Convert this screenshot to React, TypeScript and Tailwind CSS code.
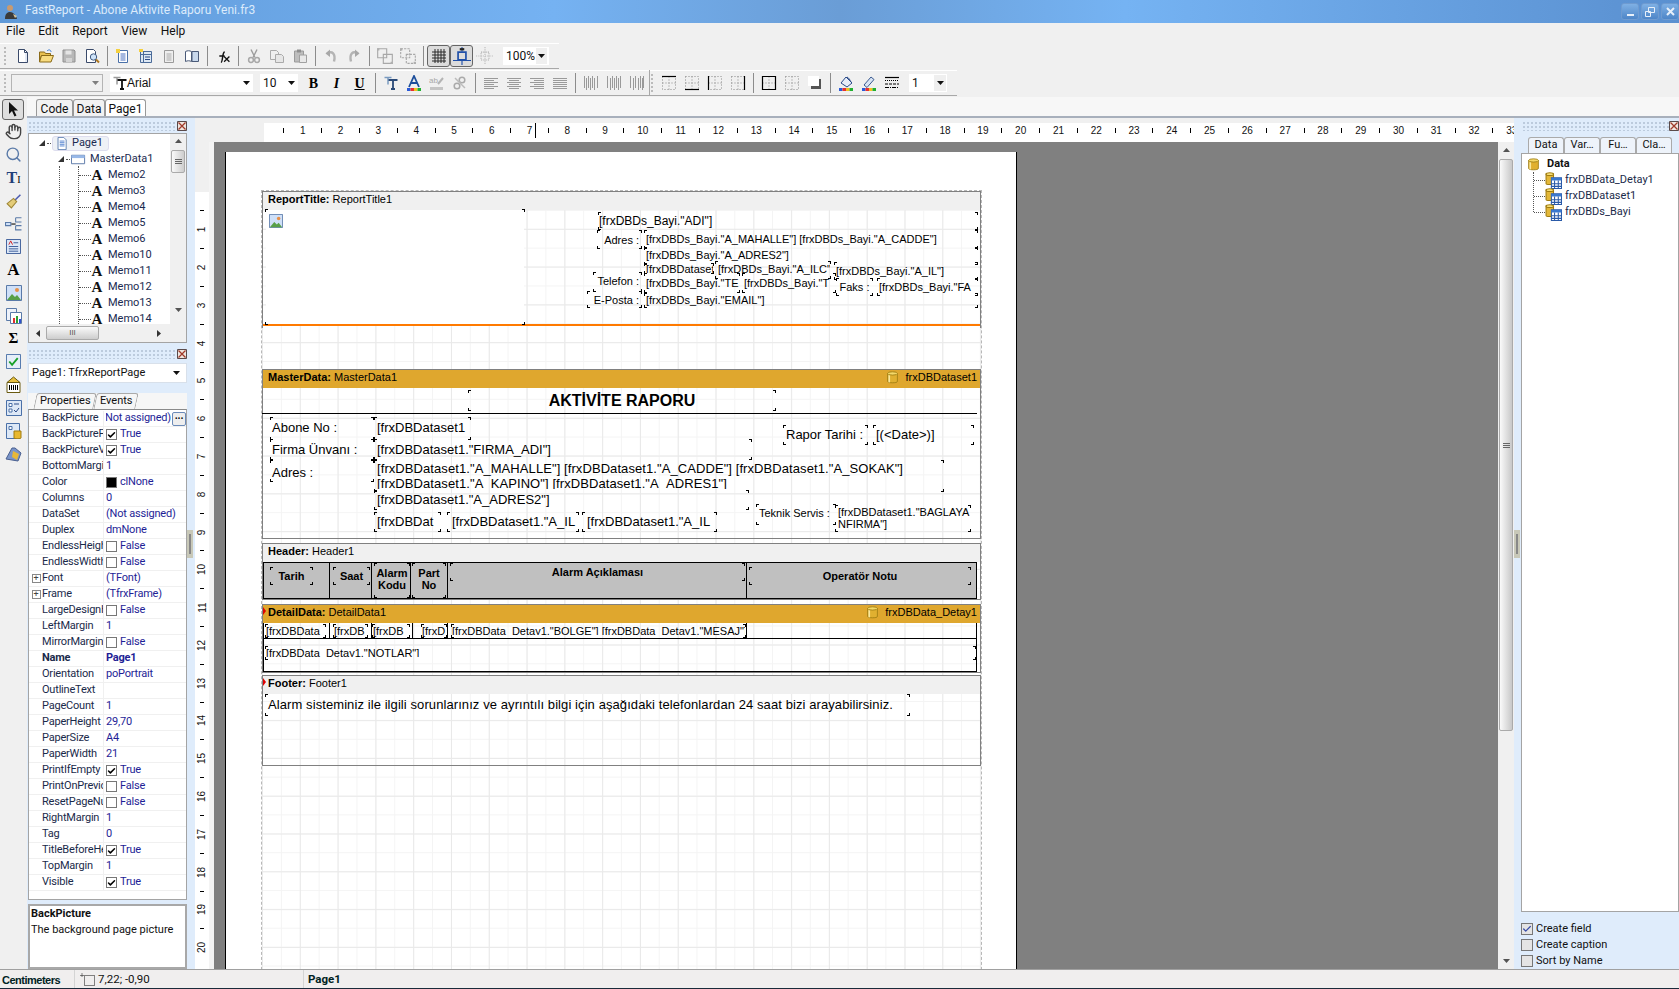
import type { ReactNode } from "react";
import { Check, Search, Hand } from "lucide-react";

// small inline toolbar glyphs, all on a 16px box
const Svg = ({ children, size = 16, className = "" }: { children: ReactNode; size?: number; className?: string }) => (
  <svg width={size} height={size} viewBox="0 0 16 16" fill="none" className={`shrink-0 ${className}`}>{children}</svg>
);

const NewDoc = () => <Svg><path d="M3.5 1.5h6l3 3v10h-9z" fill="#fff" stroke="#3a4a6a" /><path d="M9.5 1.5v3h3" stroke="#3a4a6a" /><path d="M11 5v9" stroke="#c8d4e8" /></Svg>;
const OpenFolder = () => <Svg><path d="M1.5 4h5l1 1.5h5v2h-9l-2 6z" fill="#e8c050" stroke="#8a6a18" /><path d="M3.5 7.5h12l-2.5 6.5H1.5z" fill="#f8dc80" stroke="#8a6a18" /><path d="M9 3c2-2 4-1 4 1" stroke="#3a7ad0" /></Svg>;
const SaveIcon = () => <Svg><path d="M2 2h11l1 1v11H2z" fill="#b8b8b8" stroke="#909090" /><path d="M4.500 2.500h6v4h-6z" fill="#e4e4e4" /><path d="M5 10h6v4H5z" fill="#d4d4d4" /></Svg>;
const Preview = () => <Svg><path d="M2.500 1.500h7l2 2v11h-9z" fill="#fff" stroke="#3a4a6a" /><circle cx="9.500" cy="9" r="3.200" fill="#cfe4fa" stroke="#405a80" /><path d="M12 11.500l3 3" stroke="#b07820" strokeWidth="2" /></Svg>;
const PageLines = ({ star = false, muted = false }: { star?: boolean; muted?: boolean }) => (
  <Svg>
    <path d="M3.500 2.500h9v12h-9z" fill={muted ? "#eee" : "#fff"} stroke={muted ? "#9a9a9a" : "#4a70a8"} />
    <path d="M5.500 6h5M5.500 8h5M5.500 10h5M5.500 12h5" stroke={muted ? "#aaa" : "#4a70c0"} />
    {star && <path d="M1 1h4v4H1z" fill="#f4d040" />}
  </Svg>
);
const VarsIcon = () => <Svg><path d="M2.500 3.500h11v11h-11z" fill="#dde8f4" stroke="#4a6a98" /><path d="M2.500 6.500h11M5.500 3.500v11" stroke="#4a6a98" /><path d="M7 9h5M7 11.500h5" stroke="#2a4a88" /><path d="M1 1h4v3H1z" fill="#f4d040" /></Svg>;
const BookIcon = () => <Svg><path d="M1.500 3.500c2-1 4-1 6 0v10c-2-1-4-1-6 0z" fill="#fff" stroke="#4a5a78" /><path d="M8 3.500h6.500v10H8z" fill="#c8d8ec" stroke="#4a5a78" /></Svg>;
const Scissors = () => <Svg><path d="M5 1.500l4 8M11 1.500l-4 8" stroke="#9c9c9c" strokeWidth="1.400" /><circle cx="5" cy="12" r="2.400" stroke="#a8a8a8" strokeWidth="1.500" /><circle cx="11" cy="12" r="2.400" stroke="#a8a8a8" strokeWidth="1.500" /></Svg>;
const CopyIcon = () => <Svg><path d="M1.500 2.500h6l2 2v7h-8z" fill="#efefef" stroke="#aaa" /><path d="M6.500 6.500h6l2 2v6h-8z" fill="#e6e6e6" stroke="#aaa" /></Svg>;
const PasteIcon = () => <Svg><path d="M2.500 3h9v11h-9z" fill="#bdbdbd" stroke="#9a9a9a" /><path d="M5 1.500h4v3H5z" fill="#8e8e8e" /><path d="M7.500 7h7v7.500h-7z" fill="#e8e8e8" stroke="#a0a0a0" /></Svg>;
const Undo = ({ flip = false }: { flip?: boolean }) => <Svg className={flip ? "-scale-x-100" : ""}><path d="M4 5.500c5-3 9 0 7 8" stroke="#b4b4b4" strokeWidth="2.400" /><path d="M7 1.500L2.500 5.500 7 9z" fill="#a8a8a8" /></Svg>;
const GroupIcon = ({ alt = false }: { alt?: boolean }) => (
  <Svg size={18}>
    <path d="M1.500 1.500h8v8h-8zM6.500 6.500h8v8h-8z" stroke="#a8a8a8" strokeDasharray={alt ? "2 1" : undefined} />
    <path d="M1 1h2v2H1zM13 13h2v2h-2z" fill="#b0b0b0" />
  </Svg>
);
const GridIcon = () => <Svg><path d="M1 4h14M1 7h14M1 10h14M1 13h14M4 1v14M7 1v14M10 1v14M13 1v14" stroke="#2a2a2a" /></Svg>;
const FitIcon = () => <Svg size={18}><path d="M4.500 4.500h7v7h-7z" stroke="#1f4fa8" strokeWidth="1.500" /><path d="M0 12h16M8 0v4M8 12v4" stroke="#1f4fa8" /><path d="M6 1h4v2H6z" fill="#222" /></Svg>;
const DotFit = () => <Svg size={18}><path d="M4.500 4.500h7v7h-7z" stroke="#aaa" strokeDasharray="1 1" /><path d="M0 8h16M8 0v16" stroke="#bbb" strokeDasharray="1 1" /></Svg>;
const FxIcon = () => <Svg size={17}><path d="M6.500 13.500c2 0 1-9 3.500-10M5 7.500h5" stroke="#111" strokeWidth="1.400" /><path d="M9.500 8l5 5M14.500 8l-5 5" stroke="#111" strokeWidth="1.200" /></Svg>;
const TextT = ({ color = "#111", shadow = "#9a9a9a" }: { color?: string; shadow?: string }) => (
  <Svg>
    <path d="M1.500 2.500h7M5 2.500v7" stroke={shadow} strokeWidth="1.500" />
    <path d="M5.500 5h9M10 5v9M8 14h4" stroke={color} strokeWidth="1.800" />
  </Svg>
);
const ColorBar = () => <g><path d="M1 13h3.500v3H1z" fill="#2a5ad8" /><path d="M4.500 13H8v3H4.500z" fill="#e83030" /><path d="M8 13h3.500v3H8z" fill="#f0c020" /><path d="M11.500 13H15v3h-3.500z" fill="#20b030" /></g>;
const FontColor = () => <Svg><path d="M3 12L8 1l5 11M5 8h6" stroke="#1d4e9a" strokeWidth="1.800" /><ColorBar /></Svg>;
const AbcHighlight = () => <Svg><text x="0" y="8" fontSize="8" fontFamily="Liberation Sans" fill="#a8a8a8">ab</text><path d="M9 9l5-6" stroke="#b4b4b4" strokeWidth="2" /><path d="M1 12h13v3H1z" fill="#c4c4c4" /></Svg>;
const LinkIcon = () => <Svg><circle cx="5" cy="11" r="2.800" stroke="#aaa" strokeWidth="1.500" /><circle cx="10" cy="5" r="2.800" stroke="#aaa" strokeWidth="1.500" /><path d="M3 3l10 10" stroke="#bbb" strokeWidth="1.500" /></Svg>;
const AlignLines = ({ mode }: { mode: "l" | "c" | "r" | "j" }) => {
  const short = mode === "j" ? [1, 15] : mode === "l" ? [1, 11] : mode === "c" ? [3, 13] : [5, 15];
  return (
    <Svg>
      {[3, 5, 7, 9, 11, 13].map((y, i) => (
        <path key={y} d={`M${i % 2 ? short[0] : 1} ${y + 0.5}H${i % 2 ? short[1] : 15}`} stroke="#9a9a9a" />
      ))}
    </Svg>
  );
};
const Bars = ({ xs }: { xs: number[] }) => <Svg>{xs.map((x, i) => <path key={x} d={`M${x + 0.5} ${i % 2 ? 3 : 1}V${i % 2 ? 15 : 13}`} stroke="#9a9a9a" />)}</Svg>;
const FrameIcon = ({ side }: { side?: "t" | "b" | "l" | "r" | "all" }) => (
  <Svg>
    <path d="M1.500 1.500h13v13h-13zM8 1.500v13M1.500 8h13" stroke="#8a8a8a" strokeDasharray="1 2" />
    {side === "t" && <path d="M1 1.500h14" stroke="#000" strokeWidth="1.200" />}
    {side === "b" && <path d="M1 14.500h14" stroke="#000" strokeWidth="1.200" />}
    {side === "l" && <path d="M1.500 1v14" stroke="#000" strokeWidth="1.200" />}
    {side === "r" && <path d="M14.500 1v14" stroke="#000" strokeWidth="1.200" />}
    {side === "all" && <path d="M1.500 1.500h13v13h-13z" stroke="#000" strokeWidth="1.200" />}
  </Svg>
);
const ShadowIcon = () => <Svg><path d="M4 12V4h10v10H4z" fill="#555" /><path d="M1 1h11v10H1z" fill="#fff" /></Svg>;
const Bucket = () => <Svg><path d="M3 8l5-6 6 6-5 4z" fill="#e8eef8" stroke="#2a4a88" /><path d="M9 2c2 1 3 3 4 5" stroke="#2a4a88" /><ColorBar /></Svg>;
const Pen = () => <Svg><path d="M3 10l7-8 3 2.500-7 8z" fill="#d8e4f4" stroke="#3a5a90" /><ColorBar /></Svg>;
const LineStyle = () => <Svg><path d="M1 2.500h14" stroke="#000" strokeWidth="1.200" /><path d="M1 5.500h14" stroke="#000" strokeDasharray="1 1" /><path d="M1 9h14" stroke="#000" strokeDasharray="3 1" /><path d="M1 12.500h14" stroke="#000" strokeDasharray="4 1 1 1" /></Svg>;
const Db = ({ size = 13 }: { size?: number }) => (
  <Svg size={size}>
    <path d="M2 3v10c0 2 12 2 12 0V3z" fill="#e0b030" stroke="#9a7a10" />
    <path d="M4 5v9" stroke="#f8e8a0" strokeWidth="2" />
    <ellipse cx="8" cy="3" rx="6" ry="2" fill="#f4d868" stroke="#9a7a10" />
  </Svg>
);
const DbTable = () => (
  <Svg size={17}>
    <path d="M1 2v9c0 1 7 1 7 0V2z" fill="#e4b838" stroke="#a07c10" />
    <ellipse cx="4.500" cy="2" rx="3.500" ry="1.300" fill="#f6de78" stroke="#a07c10" />
    <path d="M6 5.500h9.500v10H6z" fill="#fff" stroke="#2a5aa8" />
    <path d="M6 5.500h9.500v2.500H6z" fill="#3a78d0" />
    <path d="M6 11h9.500M6 13.500h9.500M9 8v7.500M12.500 8v7.500" stroke="#2a5aa8" />
  </Svg>
);
const PageTree = () => <Svg size={13}><path d="M2.500 .5h7l3 3v12h-10z" fill="#fff" stroke="#4a70a8" /><path d="M4.500 5h6M4.500 7h6M4.500 9h6M4.500 11h6" stroke="#3a70c8" /></Svg>;
const BandIcon = () => <Svg size={15}><path d="M.5 3.500h14v9H.5z" fill="#fff" stroke="#5a78a8" /><path d="M.5 3.500h14v3H.5z" fill="#98b8e8" /></Svg>;
const BigA = () => <span className="font-['Liberation_Serif',serif] font-bold text-[15px] leading-none text-[#111] w-[12px] text-center shrink-0">A</span>;
const Triangle = () => <svg width="6" height="6" viewBox="0 0 6 6" className="shrink-0"><path d="M0 6L6 0v6z" fill="#333" /></svg>;
const Caret = ({ className = "" }: { className?: string }) => <svg width="7" height="4" viewBox="0 0 7 4" className={`shrink-0 ${className}`}><path d="M0 0h7L3.500 4z" fill="#111" /></svg>;
const CloseBox = () => (
  <svg width="10" height="10" viewBox="0 0 10 10" className="shrink-0">
    <path d="M.5.500h9v9h-9z" fill="#efe6e0" stroke="#5a4a4a" />
    <path d="M1.500 1.500l7 7M8.500 1.500l-7 7" stroke="#a03a2a" strokeWidth="1.300" />
  </svg>
);
const Picture = ({ size = 14 }: { size?: number }) => (
  <Svg size={size}>
    <path d="M.5.500h15v15H.5z" fill="#cfe0f8" stroke="#5a7aa8" />
    <path d="M1 15l5-6 3 3 2-2 4 5z" fill="#58a048" />
    <circle cx="11" cy="5" r="2" fill="#e89048" />
  </Svg>
);

const ToolBtn = ({ children, active = false }: { children: ReactNode; active?: boolean }) => (
  <div className={`w-[23px] h-[22px] shrink-0 flex items-center justify-center rounded-[3px] ${active ? "border border-[#666] bg-[#dcdcdc]" : ""}`}>{children}</div>
);
const Sep = () => <div className="w-[8px] h-[20px] shrink-0 flex justify-center"><div className="w-[1px] h-full bg-[#8c8c8c]" /></div>;
const Grip = () => <div className="w-[4px] h-[20px] shrink-0 bg-[radial-gradient(#bbbbbb_1px,transparent_1px)] bg-[size:4px_4px]" />;

function TitleBar() {
  return (
    <div className="h-[23px] shrink-0 flex items-center bg-[linear-gradient(to_right,#5f99d8_0%,#75b2f2_33%,#6a9dd6_50%,#75b3f3_67%,#5a90d0_100%)]">
      <svg width="16" height="16" viewBox="0 0 16 16" className="ml-[3px] shrink-0">
        <circle cx="7" cy="4" r="3" fill="#c89a70" />
        <path d="M2 15c0-5 2-7 5-7s6 3 7 7z" fill="#3a3a3a" />
        <path d="M10 10l4 2-2 2z" fill="#d8c8a0" />
      </svg>
      <span className="ml-[6px] mt-[-3px] text-[12px] text-[#dcebfb]">FastReport - Abone Aktivite Raporu Yeni.fr3</span>
      <div className="ml-auto flex gap-[2px]">
        {["min", "max", "close"].map((b) => (
          <div key={b} className="w-[18px] h-[17px] rounded-[3px] border border-[#6f9bd0] bg-[linear-gradient(to_bottom,#7fb0e4,#4e86c8)] flex items-center justify-center">
            {b === "min" && <div className="w-[7px] h-[2px] mt-[7px] bg-[#e8f0fa]" />}
            {b === "max" && <svg width="10" height="10" viewBox="0 0 10 10"><path d="M3.500.500h6v5h-6zM.500 4.500h5v5h-5z" stroke="#e8f0fa" fill="none" /></svg>}
            {b === "close" && <svg width="9" height="9" viewBox="0 0 9 9"><path d="M1 1l7 7M8 1L1 8" stroke="#e8f0fa" strokeWidth="2" /></svg>}
          </div>
        ))}
      </div>
    </div>
  );
}

function MenuBar() {
  return (
    <div className="h-[20px] shrink-0 flex items-center gap-[13.500px] pl-[6px] pb-[4px] text-[12px] text-[#111] bg-[#f0f0f0]">
      <span>File</span><span>Edit</span><span>Report</span><span>View</span><span>Help</span>
    </div>
  );
}

function Toolbar1() {
  return (
    <div className="h-[27px] shrink-0 bg-[#f0f0f0]">
      <div className="w-[559px] h-[26px] flex items-center pl-[3px] border-t border-white border-b border-b-[#a8a8a8]">
        <Grip />
        <div className="w-[4px]" />
        <ToolBtn><NewDoc /></ToolBtn><ToolBtn><OpenFolder /></ToolBtn><ToolBtn><SaveIcon /></ToolBtn><ToolBtn><Preview /></ToolBtn>
        <Sep />
        <ToolBtn><PageLines star /></ToolBtn><ToolBtn><VarsIcon /></ToolBtn><ToolBtn><PageLines muted /></ToolBtn><ToolBtn><BookIcon /></ToolBtn>
        <Sep />
        <ToolBtn><FxIcon /></ToolBtn>
        <Sep />
        <ToolBtn><Scissors /></ToolBtn><ToolBtn><CopyIcon /></ToolBtn><ToolBtn><PasteIcon /></ToolBtn>
        <Sep />
        <ToolBtn><Undo /></ToolBtn><ToolBtn><Undo flip /></ToolBtn>
        <Sep />
        <ToolBtn><GroupIcon /></ToolBtn><ToolBtn><GroupIcon alt /></ToolBtn>
        <Sep />
        <ToolBtn active><GridIcon /></ToolBtn><ToolBtn active><FitIcon /></ToolBtn><ToolBtn><DotFit /></ToolBtn>
        <div className="ml-[7px] w-[46px] h-[18px] bg-white flex items-center justify-between pl-[3px] pr-[2px] text-[12px] text-[#111]">
          100%
          <div className="w-[11px] h-[16px] bg-[#efefef] flex items-center justify-center"><Caret /></div>
        </div>
      </div>
    </div>
  );
}

function Toolbar2() {
  return (
    <div className="h-[27px] shrink-0 bg-[#f0f0f0]">
      <div className="w-[957px] h-[26px] flex items-center pl-[3px] border-t border-white border-b border-b-[#a8a8a8]">
        <Grip />
        <div className="ml-[4px] w-[92px] h-[18px] border border-[#b4b4b4] bg-[#f0f0f0] flex items-center justify-end pr-[3px]"><Caret className="opacity-50" /></div>
        <div className="ml-[7px] w-[143px] h-[18px] bg-white flex items-center pl-[2px] pr-[3px] text-[12px] text-[#111] font-['Liberation_Sans',sans-serif]">
          <TextT />
          <span className="ml-[-1px]">Arial</span>
          <Caret className="ml-auto" />
        </div>
        <div className="ml-[7px] w-[38px] h-[18px] bg-white flex items-center pl-[3px] pr-[3px] text-[12px] text-[#111]">
          10
          <Caret className="ml-auto" />
        </div>
        <div className="w-[4px]" />
        <ToolBtn><span className="font-['Liberation_Serif',serif] font-bold text-[14px] text-black">B</span></ToolBtn>
        <ToolBtn><span className="font-['Liberation_Serif',serif] font-bold italic text-[14px] text-black">I</span></ToolBtn>
        <ToolBtn><span className="font-['Liberation_Serif',serif] font-bold underline text-[14px] text-black">U</span></ToolBtn>
        <Sep />
        <ToolBtn><TextT color="#2a4a78" shadow="#7a9ac0" /></ToolBtn><ToolBtn><FontColor /></ToolBtn><ToolBtn><AbcHighlight /></ToolBtn><ToolBtn><LinkIcon /></ToolBtn>
        <Sep />
        <ToolBtn><AlignLines mode="l" /></ToolBtn><ToolBtn><AlignLines mode="c" /></ToolBtn><ToolBtn><AlignLines mode="r" /></ToolBtn><ToolBtn><AlignLines mode="j" /></ToolBtn>
        <Sep />
        <ToolBtn><Bars xs={[1, 3, 5, 7, 9, 11, 14]} /></ToolBtn><ToolBtn><Bars xs={[1, 4, 6, 8, 10, 12, 14]} /></ToolBtn><ToolBtn><Bars xs={[1, 4, 6, 9, 11, 13, 14]} /></ToolBtn>
        <div className="w-[1px] h-[26px] bg-[#a8a8a8] ml-[1px]" />
        <Grip />
        <div className="w-[3px]" />
        <ToolBtn><FrameIcon side="t" /></ToolBtn><ToolBtn><FrameIcon side="b" /></ToolBtn><ToolBtn><FrameIcon side="l" /></ToolBtn><ToolBtn><FrameIcon side="r" /></ToolBtn>
        <Sep />
        <ToolBtn><FrameIcon side="all" /></ToolBtn><ToolBtn><FrameIcon /></ToolBtn><ToolBtn><ShadowIcon /></ToolBtn>
        <Sep />
        <ToolBtn><Bucket /></ToolBtn><ToolBtn><Pen /></ToolBtn><ToolBtn><LineStyle /></ToolBtn>
        <div className="ml-[6px] w-[38px] h-[18px] bg-white flex items-center justify-between pl-[3px] pr-[1px] text-[12px] text-[#111]">
          1
          <div className="w-[12px] h-[16px] bg-[#efefef] flex items-center justify-center"><Caret /></div>
        </div>
      </div>
    </div>
  );
}

const Tool = ({ children }: { children: ReactNode }) => <div className="w-[22px] h-[21px] flex items-center justify-center">{children}</div>;

function ToolColumn() {
  return (
    <div className="w-[27px] shrink-0 bg-[#f0f0f0] flex flex-col items-center pt-[2px]">
      <div className="w-[22px] h-[21px] border border-[#666] rounded-[3px] bg-[#dedede] flex items-center justify-center ml-[-2px]">
        <svg width="12" height="15" viewBox="0 0 12 15"><path d="M2 0v12l3-3 2.500 5.500 2-1L7 8.500h4z" fill="#111" /></svg>
      </div>
      <div className="flex flex-col items-center gap-[2px] mt-[1px]">
        <Tool><Hand size={17} color="#444" /></Tool>
        <Tool><Search size={17} color="#5a7aa8" /></Tool>
        <Tool><span className="font-['Liberation_Serif',serif] font-bold text-[16px] text-[#1f3f7a] leading-none">T<span className="text-black text-[10px] font-normal">I</span></span></Tool>
        <Tool><svg width="17" height="17" viewBox="0 0 16 16"><path d="M9 7l5-5 1 1-5 5z" fill="#4a5ab0" /><path d="M2 11l6-5 3 3-5 6z" fill="#e4cc78" stroke="#a08838" /></svg></Tool>
        <Tool><svg width="17" height="17" viewBox="0 0 16 16" fill="none"><path d="M.5 7h5v3h-5z" fill="#cfe0f8" stroke="#5a7aa8" /><path d="M10 2.500h5.500M10 2.500v4h5.500M10 10h5.500M10 10v4h5.500" stroke="#5a7aa8" /><path d="M6 8.500h4" stroke="#000" /></svg></Tool>
        <Tool><svg width="15" height="15" viewBox="0 0 16 16" fill="none"><path d="M.5.500h15v15H.5z" fill="#dce8f8" stroke="#3a5a98" /><path d="M3 6l2-4 2 4" stroke="#d02020" /><path d="M8 4h5M3 8h10M3 10.500h10M3 13h10" stroke="#3a5a98" /></svg></Tool>
        <Tool><span className="font-['Liberation_Serif',serif] font-bold text-[17px] text-black leading-none">A</span></Tool>
        <Tool><Picture size={16} /></Tool>
        <Tool><svg width="16" height="16" viewBox="0 0 16 16"><path d="M.5.500h10v12H.5z" fill="#eef2fa" stroke="#5a7aa8" /><path d="M4.500 4.500h11v11h-11z" fill="#fff" stroke="#5a7aa8" /><path d="M7 10h2v5H7z" fill="#e03030" /><path d="M10 8h2v7h-2z" fill="#30a030" /><path d="M13 11h2v4h-2z" fill="#3050d0" /></svg></Tool>
        <Tool><span className="font-['Liberation_Serif',serif] font-bold text-[15px] text-black leading-none">Σ</span></Tool>
        <Tool><svg width="15" height="15" viewBox="0 0 16 16" fill="none"><path d="M.5.500h15v15H.5z" fill="#e6eef8" stroke="#4a70a8" /><path d="M3.500 8l3 3.500 6-7" stroke="#18a028" strokeWidth="2" /></svg></Tool>
        <Tool><svg width="15" height="17" viewBox="0 0 15 17"><path d="M1 6.500h13v10H1z" fill="#fff" stroke="#6a5a10" /><path d="M1 6.500L7.500 1 14 6.500z" fill="#e8c040" stroke="#6a5a10" /><path d="M3.500 9v5M5.500 9v5M7.500 9v5M9.500 9v5M11.500 9v5" stroke="#000" /></svg></Tool>
        <Tool><svg width="16" height="16" viewBox="0 0 16 16" fill="none"><path d="M.5.500h15v15H.5z" fill="#dde8f6" stroke="#4a70a8" /><path d="M3 3.500h3v3H3zM3 9h3v3H3z" fill="#fff" stroke="#4a70a8" /><path d="M8 4h5M8 10l2 2 3-4" stroke="#2a4a88" /></svg></Tool>
        <Tool><svg width="16" height="16" viewBox="0 0 16 16"><path d="M.5.500h13v15H.5z" fill="#dde8f6" stroke="#4a70a8" /><path d="M3 3.500h3v3H3z" fill="#fff" stroke="#4a70a8" /><path d="M8 8v7c0 1 7 1 7 0V8z" fill="#e8b830" stroke="#a07c10" /></svg></Tool>
        <Tool><svg width="17" height="16" viewBox="0 0 17 16"><path d="M1 13L7 2h3l6 5-3 8z" fill="#7a94c8" stroke="#4a6090" /><path d="M8 5l6 3-2 6-5-3z" fill="#e8b838" /></svg></Tool>
      </div>
    </div>
  );
}

const PanelHead = () => (
  <div className="h-[10px] flex items-center justify-end bg-[radial-gradient(#bccbdd_1px,transparent_1px)] bg-[size:4px_4px]"><CloseBox /></div>
);

const memoRows = ["Memo2", "Memo3", "Memo4", "Memo5", "Memo6", "Memo10", "Memo11", "Memo12", "Memo13", "Memo14"];

function TreePanel() {
  return (
    <div className="h-[210px] mt-[2px] flex border border-[#a4a4a4] bg-white text-[11px] text-[#1a2a50] overflow-hidden">
      <div className="w-[142px] flex flex-col">
        <div className="relative flex-1 overflow-hidden">
          <div className="absolute left-[30px] top-[32px] h-[180px] border-l border-dotted border-[#555]" />
          <div className="absolute left-[49px] top-[32px] h-[180px] border-l border-dotted border-[#555]" />
          <div className="h-[16px] mt-[1px] flex items-center pl-[10px]">
            <Triangle />
            <span className="ml-[2px] w-[4px] border-t border-dotted border-[#555]" />
            <span className="ml-[1px] h-[15px] w-[57px] flex items-center gap-[3px] pl-[3px] bg-[#eef1f6] border border-[#dde] rounded-[3px]"><PageTree />Page1</span>
          </div>
          <div className="h-[16px] flex items-center pl-[29px]">
            <Triangle />
            <span className="ml-[2px] w-[4px] border-t border-dotted border-[#555]" />
            <span className="ml-[1px] flex items-center gap-[4px]"><BandIcon />MasterData1</span>
          </div>
          {memoRows.map((m) => (
            <div key={m} className="h-[16px] flex items-center pl-[50px]">
              <span className="w-[12px] border-t border-dotted border-[#555]" />
              <BigA />
              <span className="ml-[5px]">{m}</span>
            </div>
          ))}
        </div>
        <div className="h-[18px] shrink-0 bg-[#f0f0f0] flex items-center pl-[7px]">
          <svg width="4" height="7" viewBox="0 0 4 7"><path d="M4 0v7L0 3.500z" fill="#333" /></svg>
          <div className="ml-[6px] w-[53px] h-[14px] rounded-[2px] border border-[#aaa] bg-[linear-gradient(to_bottom,#fafafa,#cdcdcd)] flex items-center justify-center text-[8px] leading-none text-[#555]">III</div>
          <svg width="4" height="7" viewBox="0 0 4 7" className="ml-auto mr-[9px]"><path d="M0 0v7l4-3.500z" fill="#333" /></svg>
        </div>
      </div>
      <div className="w-[16px] shrink-0 bg-[#f0f0f0] flex flex-col items-center pt-[5px]">
        <Caret className="rotate-180 opacity-70" />
        <div className="mt-[7px] w-[14px] h-[23px] rounded-[2px] border border-[#aaa] bg-[linear-gradient(to_right,#fafafa,#cdcdcd)] flex flex-col gap-[1px] items-center justify-center">
          <div className="w-[7px] h-px bg-[#666]" /><div className="w-[7px] h-px bg-[#666]" /><div className="w-[7px] h-px bg-[#666]" />
        </div>
        <Caret className="mt-[135px] opacity-70" />
      </div>
    </div>
  );
}

type Prop = { n: string; v?: string; chk?: boolean; bold?: boolean; plus?: boolean; swatch?: boolean };
const props: Prop[] = [
  { n: "BackPicture", v: "(Not assigned)" },
  { n: "BackPicturePrintable", v: "True", chk: true },
  { n: "BackPictureVisible", v: "True", chk: true },
  { n: "BottomMargin", v: "1" },
  { n: "Color", v: "clNone", swatch: true },
  { n: "Columns", v: "0" },
  { n: "DataSet", v: "(Not assigned)" },
  { n: "Duplex", v: "dmNone" },
  { n: "EndlessHeight", v: "False", chk: false },
  { n: "EndlessWidth", v: "False", chk: false },
  { n: "Font", v: "(TFont)", plus: true },
  { n: "Frame", v: "(TfrxFrame)", plus: true },
  { n: "LargeDesignHeight", v: "False", chk: false },
  { n: "LeftMargin", v: "1" },
  { n: "MirrorMargins", v: "False", chk: false },
  { n: "Name", v: "Page1", bold: true },
  { n: "Orientation", v: "poPortrait" },
  { n: "OutlineText", v: "" },
  { n: "PageCount", v: "1" },
  { n: "PaperHeight", v: "29,70" },
  { n: "PaperSize", v: "A4" },
  { n: "PaperWidth", v: "21" },
  { n: "PrintIfEmpty", v: "True", chk: true },
  { n: "PrintOnPreviousPage", v: "False", chk: false },
  { n: "ResetPageNumbers", v: "False", chk: false },
  { n: "RightMargin", v: "1" },
  { n: "Tag", v: "0" },
  { n: "TitleBeforeHeader", v: "True", chk: true },
  { n: "TopMargin", v: "1" },
  { n: "Visible", v: "True", chk: true },
];

const Tick = ({ on }: { on: boolean }) => (
  <div className="w-[11px] h-[11px] border border-[#777] bg-white flex items-center justify-center shrink-0">
    {on && <Check size={10} strokeWidth={4} color="#000" />}
  </div>
);

function PropGrid() {
  return (
    <div className="h-[491px] pt-[1px] border border-[#a4a4a4] border-t-[#8a8a8a] bg-white text-[11px] tracking-[-0.2px] overflow-hidden">
      {props.map((p, i) => (
        <div key={p.n} className={`h-[16px] flex border-b border-[#f0f0f0] ${p.bold ? "font-bold" : ""}`}>
          <div className="w-[75px] shrink-0 flex items-center overflow-hidden whitespace-nowrap text-[#1a2a4a] border-r border-[#f0f0f0]">
            <div className="w-[13px] shrink-0 flex justify-center pl-[1px]">
              {p.plus && <div className="w-[9px] h-[9px] border border-[#888] flex items-center justify-center text-[9px] leading-none text-[#444]">+</div>}
            </div>
            {p.n}
          </div>
          <div className="flex-1 min-w-0 flex items-center gap-[3px] pl-[2px] text-[#1e1e96] whitespace-nowrap overflow-hidden">
            {p.chk !== undefined && <Tick on={p.chk} />}
            {p.swatch && <div className="w-[11px] h-[11px] bg-black border border-[#777] shrink-0" />}
            {i === 0 ? (
              <div className="flex-1 flex items-center justify-end overflow-hidden">
                <span className="shrink-0">{p.v}</span>
                <div className="ml-[1px] w-[14px] h-[14px] shrink-0 border border-[#6a8ab8] bg-[#eee] rounded-[2px] flex items-center justify-center text-[10px] font-bold leading-none text-black">···</div>
              </div>
            ) : (
              p.v
            )}
          </div>
        </div>
      ))}
    </div>
  );
}

function LeftDock() {
  return (
    <div className="w-[168px] shrink-0 bg-[#dfecfb] pl-[1px] pr-[8px] pt-[3px] relative">
      <PanelHead />
      <TreePanel />
      <div className="mt-[6px]"><PanelHead /></div>
      <div className="mt-[4px] h-[20px] bg-white border border-[#d8e0ea] flex items-center justify-between pl-[3px] pr-[6px] text-[11px] text-[#111]">
        Page1: TfrxReportPage
        <Caret />
      </div>
      <div className="mt-[10px] h-[16px] flex items-end pl-[7px] text-[11px] text-[#111] bg-[#f6f6f6]">
        <div className="w-[60px] h-[16px] border border-b-0 border-[#aaa] rounded-t-[3px] -skew-x-12 flex items-center justify-center"><span className="skew-x-12">Properties</span></div>
        <div className="w-[42px] h-[16px] border border-b-0 border-[#aaa] rounded-t-[3px] -skew-x-12 flex items-center justify-center"><span className="skew-x-12">Events</span></div>
      </div>
      <PropGrid />
      <div className="mt-[4px] h-[65px] border-2 border-[#a8a8a8] bg-white pl-[1px] text-[11px] leading-[16px] text-[#111]">
        <div className="font-bold">BackPicture</div>
        The background page picture
      </div>
      <div className="absolute left-[160px] top-[412px] w-[6px] h-[28px] bg-[#c8c8b8] flex items-center justify-center">
        <div className="w-[2px] h-[20px] bg-[radial-gradient(#888_1px,transparent_1px)] bg-[size:2px_3px]" />
      </div>
    </div>
  );
}

// Brackets at the corners of a report object
const Corners = () => (
  <>
    <span className="absolute -left-[1px] -top-[1px] w-[3px] h-[3px] border-l border-t border-black" />
    <span className="absolute -right-[1px] -top-[1px] w-[3px] h-[3px] border-r border-t border-black" />
    <span className="absolute -left-[1px] -bottom-[1px] w-[3px] h-[3px] border-l border-b border-black" />
    <span className="absolute -right-[1px] -bottom-[1px] w-[3px] h-[3px] border-r border-b border-black" />
  </>
);

const Memo = ({ className, children, text = "text-[11px]" }: { className: string; children?: ReactNode; text?: string }) => (
  <div className={`absolute ${className}`}>
    <Corners />
    <div className={`h-full overflow-hidden whitespace-nowrap font-['Liberation_Sans',sans-serif] text-black ${text}`}>{children}</div>
  </div>
);

// the designer cuts the lower part of a line when its memo is too short
const Clip = ({ h, children }: { h: string; children: ReactNode }) => <span className={`block overflow-hidden ${h}`}>{children}</span>;

const BandHead = ({ kind, name, data, amber = false, flag = false }: { kind: string; name: string; data?: string; amber?: boolean; flag?: boolean }) => (
  <div className={`relative h-[18px] flex items-center pl-[5px] pr-[3px] pb-[3px] text-[11px] text-black font-['Liberation_Sans',sans-serif] ${amber ? "bg-[#dfa72e]" : "bg-[#f0f0f0]"}`}>
    {flag && <span className="absolute left-0 top-[2px] w-0 h-0 border-y-[4px] border-y-transparent border-l-[3px] border-l-[#e00000]" />}
    <b>{kind}:</b>&nbsp;{name}
    {data && <span className="ml-auto flex items-center gap-[6px]"><Db />{data}</span>}
  </div>
);

const bandBox = "relative w-[719px] border border-[#808080]";

function ReportTitle() {
  return (
    <div className={`${bandBox} h-[137px] border-b-0`}>
      <BandHead kind="ReportTitle" name="ReportTitle1" />
      <div className="relative h-[116px] border-b-2 border-[#ff7a00]">
        <Memo className="left-[3px] top-0 w-[258px] h-[114px] bg-white"><div className="pl-[3px] pt-[4px]"><Picture /></div></Memo>
        <Memo className="left-[336px] top-[3px] w-[378px] h-[16px]" text="text-[12px] leading-[16px]">[frxDBDs_Bayi."ADI"]</Memo>
        <Memo className="left-[335px] top-[21px] w-[43px] h-[17px]" text="text-[11px] leading-[18px] text-right pr-[2px]">Adres :</Memo>
        <Memo className="left-[382px] top-[21px] w-[332px] h-[17px]" text="text-[11px] leading-[16px] pl-[1px]">[frxDBDs_Bayi."A_MAHALLE"] [frxDBDs_Bayi."A_CADDE"]</Memo>
        <Memo className="left-[382px] top-[38px] w-[332px] h-[16px]" text="text-[11px] leading-[15px] pl-[1px]">[frxDBDs_Bayi."A_ADRES2"]</Memo>
        <Memo className="left-[382px] top-[54px] w-[68px] h-[9px]" text="text-[11px] leading-[10px] pl-[1px]">[frxDBDataset1</Memo>
        <Memo className="left-[453px] top-[52px] w-[114px] h-[16px]" text="text-[11px] leading-[15px] pl-[2px]">[frxDBDs_Bayi."A_ILC"]</Memo>
        <Memo className="left-[572px] top-[53px] w-[142px] h-[16px]" text="text-[11px] leading-[16px] pl-[1px]">[frxDBDs_Bayi."A_IL"]</Memo>
        <Memo className="left-[382px] top-[64px] w-[94px] h-[18px]" text="text-[11px] leading-[18px] pl-[1px]">[frxDBDs_Bayi."TE</Memo>
        <Memo className="left-[480px] top-[64px] w-[92px] h-[18px]" text="text-[11px] leading-[18px] pl-[1px]">[frxDBDs_Bayi."T</Memo>
        <Memo className="left-[331px] top-[63px] w-[47px] h-[18px]" text="text-[11px] leading-[17px] text-right pr-[2px]">Telefon :</Memo>
        <Memo className="left-[574px] top-[69px] w-[35px] h-[16px]" text="text-[11px] leading-[17px] text-center">Faks :</Memo>
        <Memo className="left-[615px] top-[69px] w-[99px] h-[16px]" text="text-[11px] leading-[17px] pl-[1px]">[frxDBDs_Bayi."FA</Memo>
        <Memo className="left-[325px] top-[82px] w-[53px] h-[15px]" text="text-[11px] leading-[16px] text-right pr-[2px]">E-Posta :</Memo>
        <Memo className="left-[382px] top-[84px] w-[332px] h-[13px]" text="text-[11px] leading-[13px] pl-[1px]">[frxDBDs_Bayi."EMAIL"]</Memo>
      </div>
    </div>
  );
}

function MasterData() {
  return (
    <div className={`${bandBox} mt-[41px] h-[170px]`}>
      <BandHead kind="MasterData" name="MasterData1" data="frxDBDataset1" amber />
      <div className="relative h-[150px]">
        <Memo className="left-[206px] top-[3px] w-[306px] h-[19px]" text="text-[16px] leading-[19px] font-bold text-center">AKTİVİTE RAPORU</Memo>
        <div className="absolute -left-[1px] top-[25px] w-[715px] h-px bg-black" />
        <Memo className="left-[8px] top-[30px] w-[102px] h-[21px]" text="text-[13px] leading-[20px] pl-[1px]">Abone No :</Memo>
        <Memo className="left-[112px] top-[30px] w-[95px] h-[21px]" text="text-[13px] leading-[20px] pl-[2px]">[frxDBDataset1</Memo>
        <Memo className="left-[8px] top-[52px] w-[102px] h-[19px]" text="text-[13px] leading-[20px] pl-[1px]">Firma Ünvanı :</Memo>
        <Memo className="left-[112px] top-[52px] w-[376px] h-[19px]" text="text-[13px] leading-[20px] pl-[2px]">[frxDBDataset1."FIRMA_ADI"]</Memo>
        <Memo className="left-[8px] top-[73px] w-[102px] h-[20px]" text="text-[13px] leading-[24px] pl-[1px]">Adres :</Memo>
        <Memo className="left-[112px] top-[73px] w-[568px] h-[30px]" text="text-[13px] leading-[15px] pl-[2px] tracking-[0.08px]">
          <Clip h="h-[15px]">[frxDBDataset1."A_MAHALLE"] [frxDBDataset1."A_CADDE"] [frxDBDataset1."A_SOKAK"]</Clip>
          <Clip h="h-[13px]">[frxDBDataset1."A_KAPINO"] [frxDBDataset1."A_ADRES1"]</Clip>
        </Memo>
        <Memo className="left-[112px] top-[103px] w-[373px] h-[18px]" text="text-[13px] leading-[17px] pl-[2px]">[frxDBDataset1."A_ADRES2"]</Memo>
        <Memo className="left-[112px] top-[125px] w-[65px] h-[18px]" text="text-[13px] leading-[18px] pl-[2px]">[frxDBDat</Memo>
        <Memo className="left-[185px] top-[125px] w-[130px] h-[18px]" text="text-[13px] leading-[18px] pl-[4px]">[frxDBDataset1."A_IL</Memo>
        <Memo className="left-[320px] top-[125px] w-[133px] h-[18px]" text="text-[13px] leading-[18px] pl-[4px]">[frxDBDataset1."A_IL</Memo>
        <Memo className="left-[494px] top-[117px] w-[78px] h-[19px]" text="text-[11px] leading-[16px] pl-[2px]">Teknik Servis :</Memo>
        <Memo className="left-[573px] top-[118px] w-[134px] h-[25px]" text="text-[11px] leading-[12px] pl-[2px]">
          [frxDBDataset1."BAGLAYA
          <br />
          NFIRMA"]
        </Memo>
        <Memo className="left-[521px] top-[38px] w-[83px] h-[18px]" text="text-[13px] leading-[17px] pl-[2px]">Rapor Tarihi :</Memo>
        <Memo className="left-[611px] top-[38px] w-[99px] h-[18px]" text="text-[13px] leading-[17px] pl-[2px]">[(&lt;Date&gt;)]</Memo>
      </div>
    </div>
  );
}

const HeaderCell = ({ w, children }: { w: string; children: ReactNode }) => (
  <div className={`relative h-full border-r border-black shrink-0 ${w}`}>{children}</div>
);

function HeaderBand() {
  return (
    <div className={`${bandBox} mt-[4px] h-[57px]`}>
      <BandHead kind="Header" name="Header1" />
      <div className="flex h-[37px] w-[714px] bg-[#c0c0c0] border-y border-l border-black font-bold">
        <HeaderCell w="w-[66px]"><Memo className="left-[7px] top-[5px] w-[41px] h-[16px]" text="text-[11px] leading-[16px] font-bold text-center">Tarih</Memo></HeaderCell>
        <HeaderCell w="w-[42px]"><Memo className="left-[4px] top-[5px] w-[35px] h-[16px]" text="text-[11px] leading-[16px] font-bold text-center">Saat</Memo></HeaderCell>
        <HeaderCell w="w-[39px]"><Memo className="left-[3px] top-[1px] w-[34px] h-[33px]" text="text-[11px] leading-[12px] font-bold text-center pt-[3px]">Alarm<br />Kodu</Memo></HeaderCell>
        <HeaderCell w="w-[37px]"><Memo className="left-[2px] top-[1px] w-[32px] h-[33px]" text="text-[11px] leading-[12px] font-bold text-center pt-[3px]">Part<br />No</Memo></HeaderCell>
        <HeaderCell w="w-[299px]"><Memo className="left-[3px] top-[1px] w-[293px] h-[16px]" text="text-[11px] leading-[16px] font-bold text-center">Alarm Açıklaması</Memo></HeaderCell>
        <HeaderCell w="w-[230px]"><Memo className="left-[3px] top-[5px] w-[220px] h-[16px]" text="text-[11px] leading-[16px] font-bold text-center">Operatör Notu</Memo></HeaderCell>
      </div>
    </div>
  );
}

function DetailBand() {
  const cell = "relative h-full border-r border-black shrink-0 ";
  const txt = "text-[11px] leading-[12px]";
  return (
    <div className={`${bandBox} mt-[4px] h-[69px]`}>
      <BandHead kind="DetailData" name="DetailData1" data="frxDBData_Detay1" amber flag />
      <div className="h-[49px] w-[714px] border-l border-r border-b border-black">
        <div className="flex h-[16px] border-b border-black">
          <div className={`${cell} w-[66px]`}><Memo className="left-[2px] top-[2px] w-[59px] h-[12px]" text={txt}>[frxDBData</Memo></div>
          <div className={`${cell} w-[42px]`}><Memo className="left-[4px] top-[2px] w-[33px] h-[12px]" text={txt}>[frxDB</Memo></div>
          <div className={`${cell} w-[41px]`}><Memo className="left-[1px] top-[2px] w-[36px] h-[12px]" text={txt}>[frxDB</Memo></div>
          <div className={`${cell} w-[35px]`}><Memo className="left-[9px] top-[2px] w-[24px] h-[12px]" text={txt}>[frxD</Memo></div>
          <div className={`${cell} w-[299px]`}><Memo className="left-[4px] top-[2px] w-[293px] h-[12px]" text={txt}><Clip h="h-[10px]">[frxDBData_Detay1."BOLGE"] [frxDBData_Detay1."MESAJ"]</Clip></Memo></div>
        </div>
        <div className="relative">
          <Memo className="left-[2px] top-[8px] w-[709px] h-[12px]" text={txt}><Clip h="h-[10px]">[frxDBData_Detay1."NOTLAR"]</Clip></Memo>
        </div>
      </div>
    </div>
  );
}

function FooterBand() {
  return (
    <div className={`${bandBox} mt-[2px] h-[91px]`}>
      <BandHead kind="Footer" name="Footer1" flag />
      <div className="relative">
        <Memo className="left-[3px] top-[1px] w-[643px] h-[20px]" text="text-[13px] leading-[20px] pl-[2px] tracking-[0.085px]">Alarm sisteminiz ile ilgili sorunlarınız ve ayrıntılı bilgi için aşağıdaki telefonlardan 24 saat bizi arayabilirsiniz.</Memo>
      </div>
    </div>
  );
}

function Designer() {
  const hRuler = Array.from({ length: 66 }, (_, i) => i);
  const vRuler = Array.from({ length: 40 }, (_, i) => i);
  return (
    <div className="flex-1 min-w-0 flex flex-col bg-[#f0f0f0]">
      <div className="h-[5px] shrink-0" />
      <div className="h-[19px] shrink-0 pl-[69px]">
        <div className="relative h-full bg-white flex items-center pl-[10.5px] pb-[5px] overflow-hidden font-['Liberation_Sans',sans-serif] text-[10px] text-[#111]">
          {hRuler.map((i) => (
            <div key={i} className="w-[18.9px] shrink-0 flex justify-center">
              {i % 2 ? <span>{(i + 1) / 2}</span> : <span className="w-px h-[5px] bg-black" />}
            </div>
          ))}
          <div className="absolute left-[271px] top-0 w-px h-[15px] bg-black" />
        </div>
      </div>
      <div className="flex-1 min-h-0 flex">
        <div className="w-[14px] shrink-0 flex flex-col">
          <div className="h-[50px] shrink-0" />
          <div className="flex-1 min-h-0 bg-white pt-[9.5px] overflow-hidden font-['Liberation_Sans',sans-serif] text-[10px] text-[#111]">
            {vRuler.map((i) => (
              <div key={i} className="h-[18.9px] flex items-center justify-center">
                {i % 2 ? <span className="-rotate-90">{(i + 1) / 2}</span> : <span className="w-[4px] h-px bg-black" />}
              </div>
            ))}
          </div>
        </div>
        <div className="w-[5px] shrink-0 bg-[#f4f4f4]" />
        <div className="flex-1 min-w-0 bg-[#808080] overflow-hidden pl-[11px] pt-[10px]">
          <div className="w-[792px] h-[900px] bg-white border-l border-r border-black pt-[38px] pl-[35px]">
            <div className="w-[721px] h-[800px] border-x border-t border-dashed border-[#b8b8b8] bg-[linear-gradient(to_right,#e9e9e9_1px,transparent_1px),linear-gradient(to_bottom,#e9e9e9_1px,transparent_1px),linear-gradient(to_right,#f4f4f4_1px,transparent_1px),linear-gradient(to_bottom,#f4f4f4_1px,transparent_1px)] bg-[size:37.8px_37.8px,37.8px_37.8px,18.9px_18.9px,18.9px_18.9px]">
              <ReportTitle />
              <MasterData />
              <HeaderBand />
              <DetailBand />
              <FooterBand />
            </div>
          </div>
        </div>
        <div className="w-[16px] shrink-0 bg-[#f0f0f0] flex flex-col items-center pt-[6px]">
          <Caret className="rotate-180 opacity-70" />
          <div className="mt-[7px] w-[14px] h-[572px] rounded-[2px] border border-[#aaa] bg-[linear-gradient(to_right,#fafafa,#c8c8c8)] flex flex-col gap-[1px] items-center justify-center">
            <div className="w-[7px] h-px bg-[#666]" /><div className="w-[7px] h-px bg-[#666]" /><div className="w-[7px] h-px bg-[#666]" />
          </div>
          <Caret className="mt-auto mb-[6px] opacity-70" />
        </div>
      </div>
    </div>
  );
}

function RightDock() {
  return (
    <div className="flex-1 min-w-0 bg-[#dfecfb] relative pl-[7px] pt-[3px] flex flex-col">
      <div className="ml-[1px]"><PanelHead /></div>
      <div className="h-[16px] mt-[6px] pl-[7px] flex text-[11px] text-[#111]">
        {["Data", "Var…", "Fu…", "Cla…"].map((t) => (
          <div key={t} className="w-[36px] h-[16px] border border-b-0 border-[#aaa] rounded-t-[3px] bg-[#eef3fa] flex items-center justify-center">{t}</div>
        ))}
      </div>
      <div className="h-[762px] bg-white border border-[#a4a4a4] text-[11px] text-[#1a2a4a] relative pl-[5px] pt-[2px]">
        <div className="h-[16px] flex items-center gap-[7px] font-bold text-[#111]"><Db />Data</div>
        <div className="absolute left-[11px] top-[18px] h-[40px] border-l border-dotted border-[#555]" />
        {["frxDBData_Detay1", "frxDBDataset1", "frxDBDs_Bayi"].map((n) => (
          <div key={n} className="h-[16px] flex items-center pl-[7px]">
            <span className="w-[11px] border-t border-dotted border-[#555]" />
            <DbTable />
            <span className="ml-[3px]">{n}</span>
          </div>
        ))}
      </div>
      <div className="mt-[9px] flex flex-col text-[11px] text-[#111]">
        {[
          { l: "Create field", on: true },
          { l: "Create caption", on: false },
          { l: "Sort by Name", on: false },
        ].map((o) => (
          <div key={o.l} className="h-[16px] flex items-center gap-[3px]">
            <div className="w-[12px] h-[12px] border border-[#777] bg-[#e4e4e4] flex items-center justify-center">
              {o.on && <Check size={10} strokeWidth={3} color="#3a4ea8" />}
            </div>
            {o.l}
          </div>
        ))}
      </div>
      <div className="absolute left-0 top-[412px] w-[6px] h-[28px] bg-[#c8c8b8] flex items-center justify-center">
        <div className="w-[2px] h-[20px] bg-[radial-gradient(#888_1px,transparent_1px)] bg-[size:2px_3px]" />
      </div>
    </div>
  );
}

function StatusBar() {
  return (
    <div className="h-[20px] shrink-0 border-t border-[#a0a0a0] border-b border-b-[#1a2a3a] bg-[#f0eeee] flex items-center text-[11.5px] text-[#111]">
      <div className="w-[75px] pl-[2px] pt-[2px] font-bold h-full flex items-center border-r border-[#d4d4d4] text-[#022] font-['Liberation_Sans',sans-serif] text-[11px] tracking-[-0.5px]">Centimeters</div>
      <div className="w-[229px] pl-[5px] pt-[2px] h-full flex items-center gap-[3px] border-r border-[#d4d4d4]">
        <svg width="15" height="14" viewBox="0 0 15 14" fill="none"><path d="M.5 2.500h3M2 .5v4M4.500 2.500h10v10h-10z" stroke="#111" strokeDasharray="1 1" /></svg>
        7,22; -0,90
      </div>
      <div className="pl-[4px] pt-[2px] font-bold text-[#022]">Page1</div>
    </div>
  );
}

export default function App() {
  return (
    <div className="w-[1679px] h-[989px] overflow-hidden flex flex-col bg-[#f0f0f0] font-['Roboto',sans-serif]">
      <TitleBar />
      <MenuBar />
      <Toolbar1 />
      <Toolbar2 />
      <div className="flex-1 min-h-0 flex">
        <ToolColumn />
        <div className="flex-1 min-w-0 flex flex-col">
          <div className="h-[21px] shrink-0 flex items-end pl-[9px] border-b-2 border-[#a8b0bc] bg-[#f7f7f7] text-[12px] text-[#111]">
            <div className="w-[37px] h-[17px] pt-[2px] border border-b-0 border-[#999] rounded-t-[3px] bg-[#f2f2f2] flex items-center justify-center">Code</div>
            <div className="w-[32px] h-[17px] pt-[2px] border border-b-0 border-[#999] rounded-t-[3px] bg-[#f2f2f2] flex items-center justify-center">Data</div>
            <div className="w-[41px] h-[17px] pt-[2px] border border-b-0 border-[#999] rounded-t-[3px] bg-white flex items-center justify-center">Page1</div>
          </div>
          <div className="flex-1 min-h-0 flex">
            <LeftDock />
            <Designer />
            <div className="w-[165px] shrink-0 flex"><RightDock /></div>
          </div>
        </div>
      </div>
      <StatusBar />
    </div>
  );
}
